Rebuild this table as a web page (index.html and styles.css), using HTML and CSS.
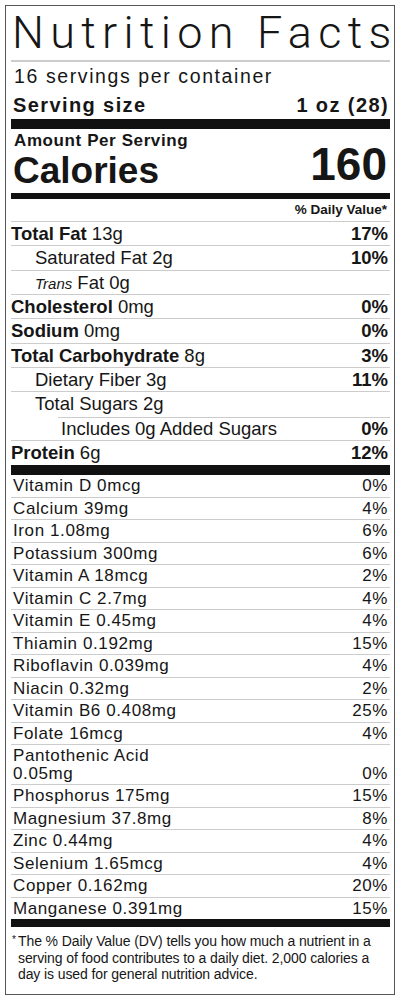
FILE: index.html
```html
<!DOCTYPE html>
<html lang="en">
<head>
	<meta charset="UTF-8">
	<title>Nutrition Facts</title>
	<link rel="stylesheet" href="styles.css">
</head>
<body>
	<div class="label">
		<h1 class="title">Nutrition Facts</h1>
		<div class="rule-thin"></div>
		<p class="servings">16 servings per container</p>
		<div class="serving-size">
			<span>Serving size</span>
			<span>1 oz (28)</span>
		</div>
		<div class="bar bar-lg"></div>

		<p class="amount">Amount Per Serving</p>
		<div class="calories">
			<span class="cal-label">Calories</span>
			<span class="cal-num">160</span>
		</div>
		<div class="bar bar-md"></div>

		<p class="dv-head">% Daily Value*</p>
		<ul class="facts">
			<li><span><b>Total Fat</b> 13g</span><b>17%</b></li>
			<li class="sub"><span>Saturated Fat 2g</span><b>10%</b></li>
			<li class="sub"><span><i>Trans</i> Fat 0g</span></li>
			<li><span><b>Cholesterol</b> 0mg</span><b>0%</b></li>
			<li><span><b>Sodium</b> 0mg</span><b>0%</b></li>
			<li><span><b>Total Carbohydrate</b> 8g</span><b>3%</b></li>
			<li class="sub"><span>Dietary Fiber 3g</span><b>11%</b></li>
			<li class="sub sugars"><span>Total Sugars 2g</span></li>
			<li class="added"><span>Includes 0g Added Sugars</span><b>0%</b></li>
			<li class="last"><span><b>Protein</b> 6g</span><b>12%</b></li>
		</ul>
		<div class="bar bar-lg"></div>

		<ul class="vitamins">
			<li><span>Vitamin D 0mcg</span><span>0%</span></li>
			<li><span>Calcium 39mg</span><span>4%</span></li>
			<li><span>Iron 1.08mg</span><span>6%</span></li>
			<li><span>Potassium 300mg</span><span>6%</span></li>
			<li><span>Vitamin A 18mcg</span><span>2%</span></li>
			<li><span>Vitamin C 2.7mg</span><span>4%</span></li>
			<li><span>Vitamin E 0.45mg</span><span>4%</span></li>
			<li><span>Thiamin 0.192mg</span><span>15%</span></li>
			<li><span>Riboflavin 0.039mg</span><span>4%</span></li>
			<li><span>Niacin 0.32mg</span><span>2%</span></li>
			<li><span>Vitamin B6 0.408mg</span><span>25%</span></li>
			<li><span>Folate 16mcg</span><span>4%</span></li>
			<li><span>Pantothenic Acid<br>0.05mg</span><span>0%</span></li>
			<li><span>Phosphorus 175mg</span><span>15%</span></li>
			<li><span>Magnesium 37.8mg</span><span>8%</span></li>
			<li><span>Zinc 0.44mg</span><span>4%</span></li>
			<li><span>Selenium 1.65mcg</span><span>4%</span></li>
			<li><span>Copper 0.162mg</span><span>20%</span></li>
			<li class="last"><span>Manganese 0.391mg</span><span>15%</span></li>
		</ul>
		<div class="bar bar-sm"></div>

		<div class="footnote">
			<span class="star">*</span>
			<p>The % Daily Value (DV) tells you how much a nutrient in a<br>serving of food contributes to a daily diet. 2,000 calories a<br>day is used for general nutrition advice.</p>
		</div>
	</div>
</body>
</html>
```

FILE: styles.css
```css
body,ul,li,div,p,h1{
	margin: 0;
	padding: 0;
}
ul,li{
	list-style: none;
}
body{
	background: #fff;
	color: #161616;
	font-family: "Liberation Sans", Arial, sans-serif;
}
.label{
	box-sizing: border-box;
	width: 390px;
	height: 990px;
	margin: 5px;
	padding: 0 4px 0 5px;
	border: 1px solid #555;
	background: #fff;
}
.title{
	font-family: Roboto, "Liberation Sans", sans-serif;
	font-weight: 300;
	font-size: 45px;
	line-height: 54px;
	letter-spacing: 6.3px;
	padding-left: 1px;
	white-space: nowrap;
}
.rule-thin{
	height: 2px;
	background: #ccc;
}
.servings{
	padding: 2px 0 0 3px;
	font-size: 19.5px;
	line-height: 24px;
	letter-spacing: 1.6px;
}
.serving-size{
	display: flex;
	justify-content: space-between;
	padding: 5px 1px 0 2px;
	font-size: 20px;
	font-weight: bold;
	line-height: 24px;
	letter-spacing: 1.4px;
}
.bar{
	background: #111;
}
.bar-lg{
	height: 10px;
}
.serving-size + .bar-lg{
	margin-top: 2px;
}
.bar-md{
	height: 6px;
}
.bar-sm{
	height: 8px;
}
.amount{
	padding: 2px 0 0 3px;
	font-size: 17px;
	font-weight: bold;
	line-height: 20px;
	letter-spacing: 0.6px;
}
.calories{
	display: flex;
	justify-content: space-between;
	height: 42px;
	padding: 0 3px 0 2px;
	font-weight: bold;
}
.cal-label{
	font-size: 37px;
	line-height: 40px;
}
.cal-num{
	font-size: 46px;
	line-height: 26px;
}
.dv-head{
	text-align: right;
	padding-right: 3px;
	font-size: 13.5px;
	font-weight: bold;
	line-height: 22px;
	border-bottom: 1px solid #ccc;
}
.facts li{
	display: flex;
	justify-content: space-between;
	box-sizing: border-box;
	height: 24.33px;
	padding-right: 2px;
	font-size: 18.5px;
	line-height: 23.33px;
	border-bottom: 1px solid #ccc;
}
.facts li.sub{
	padding-left: 24px;
}
.facts li i{
	font-size: 15px;
}
.facts li.sugars{
	border-bottom: 0;
}
.facts li.added{
	padding-left: 50px;
	background: linear-gradient(#ccc, #ccc) 47px 0 / 100% 1px no-repeat;
}
.facts li.last,
.vitamins li.last{
	border-bottom: 0;
}
.vitamins li{
	display: flex;
	justify-content: space-between;
	align-items: flex-end;
	padding: 2px 2px 2px 2px;
	font-size: 17px;
	line-height: 17.5px;
	letter-spacing: 0.6px;
	border-bottom: 1px solid #ccc;
}
.footnote{
	display: flex;
	padding: 6px 0 11px 1px;
	font-size: 14px;
	line-height: 16.5px;
	letter-spacing: -0.1px;
	white-space: nowrap;
}
.footnote .star{
	width: 6px;
	font-size: 10px;
	line-height: 14px;
}
```
